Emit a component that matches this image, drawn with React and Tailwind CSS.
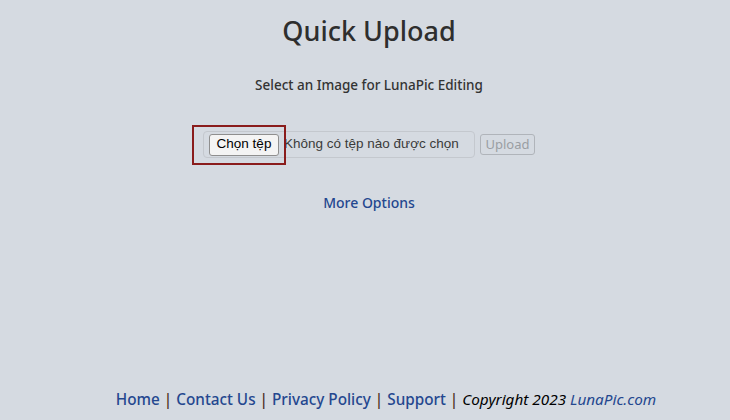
export default function App() {
  return (
    <div className="flex h-[420px] w-[730px] flex-col items-center bg-[#d5dae1] pl-[8px] font-['Noto_Sans',sans-serif] text-[#333]">
      <h1 className="mt-[11px] text-[27px] font-medium leading-[40px] text-[#2e2e2e]">Quick Upload</h1>

      <p className="mt-[24px] text-[13.5px] font-medium leading-[20px] text-[#333]">
        Select an Image for LunaPic Editing
      </p>

      {/* upload form row */}
      <div className="mt-[36px] flex items-center">
        <div className="relative flex h-[27px] w-[272px] items-center rounded-[4px] border border-[#c4c8ce] pl-[5px]">
          <div className="absolute -left-[12px] -top-[7px] h-[40px] w-[94px] border-2 border-[#8a1c1c]" />
          <button className="flex h-[22px] w-[70px] items-center justify-center rounded-[3px] border border-[#8f8f8f] bg-[#f4f4f4] font-['Liberation_Sans',sans-serif] text-[13.5px] text-black">
            Chọn tệp
          </button>
          <span className="ml-[5px] font-['Liberation_Sans',sans-serif] text-[13.5px] text-[#3a3a3a]">
            Không có tệp nào được chọn
          </span>
        </div>
        <button
          disabled
          className="ml-[5px] flex h-[21px] w-[55px] items-center justify-center rounded-[3px] border border-[#b0b4ba] text-[13px] text-[#9a9ea3]"
        >
          Upload
        </button>
      </div>

      <a className="mt-[35px] text-[14px] font-medium leading-[20px] text-[#24478f]">More Options</a>

      <div className="flex-1" />

      <footer className="mb-[9px] pl-[34px] text-[15.3px] font-medium leading-[24px]">
        <a className="text-[#24478f]">Home</a>
        <span className="text-[#4a2a1a]"> | </span>
        <a className="text-[#24478f]">Contact Us</a>
        <span className="text-[#4a2a1a]"> | </span>
        <a className="text-[#24478f]">Privacy Policy</a>
        <span className="text-[#4a2a1a]"> | </span>
        <a className="text-[#24478f]">Support</a>
        <span className="text-[#4a2a1a]"> | </span>
        <span className="font-normal italic text-black">
          Copyright 2023 <span className="text-[#24478f]">LunaPic.com</span>
        </span>
      </footer>
    </div>
  );
}
